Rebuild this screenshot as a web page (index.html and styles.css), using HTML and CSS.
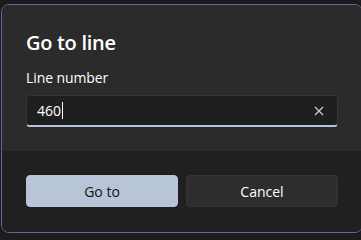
FILE: index.html
```html
<!DOCTYPE html>
<html>
<head>
<meta charset="utf-8">
<link rel="stylesheet" href="styles.css">
</head>
<body>
<div class="screen">
  <div class="dialog">
    <div class="content">
      <h1 class="title">Go to line</h1>
      <label class="label">Line number</label>
      <div class="input">
        <span class="value">460</span><span class="caret"></span>
        <span class="clear">
          <svg width="10" height="10" viewBox="0 0 10 10"><path d="M1 1 L9 9 M9 1 L1 9" stroke="#cfcfcf" stroke-width="1.2" fill="none"/></svg>
        </span>
      </div>
    </div>
    <div class="footer">
      <button class="btn primary">Go to</button>
      <button class="btn secondary">Cancel</button>
    </div>
  </div>
</div>
</body>
</html>
```

FILE: styles.css
```css
html, body {
  margin: 0;
  padding: 0;
  background: #1c1c1c;
  overflow: hidden;
  width: 361px;
  height: 235px;
}
.screen {
  padding: 4px 0 0 1px;
}
.dialog {
  width: 362px;
  height: 229px;
  box-sizing: border-box;
  border: 1px solid #5d6b9c;
  border-radius: 8px;
  overflow: hidden;
  display: flex;
  flex-direction: column;
  font-family: "Open Sans", "Noto Sans", sans-serif;
  color: #ffffff;
}
.content {
  background: #2b2b2b;
  padding: 24px 24px 24px 24px;
  height: 146px;
  box-sizing: border-box;
  display: flex;
  flex-direction: column;
}
.title {
  margin: 0 0 11px 0;
  font-size: 20px;
  line-height: 28px;
  font-weight: 600;
  letter-spacing: -0.3px;
}
.label {
  font-size: 14px;
  line-height: 20px;
  margin-bottom: 7px;
  letter-spacing: -0.1px;
}
.input {
  height: 32px;
  box-sizing: border-box;
  background: #1f1f1f;
  border: 1px solid #363636;
  border-bottom: 2px solid #b8c6dd;
  border-radius: 4px;
  display: flex;
  align-items: center;
  padding-left: 10px;
  font-size: 14px;
}
.value {
  line-height: 20px;
}
.caret {
  width: 1px;
  height: 17px;
  background: #ffffff;
  margin-left: 1px;
}
.clear {
  margin-left: auto;
  width: 36px;
  display: flex;
  justify-content: center;
  align-items: center;
}
.footer {
  flex: 1;
  background: #202020;
  padding: 24px 24px 0 24px;
  display: grid;
  grid-template-columns: 152px 152px;
  column-gap: 8px;
  align-content: start;
}
.btn {
  height: 32px;
  border-radius: 4px;
  font-family: "Open Sans", "Noto Sans", sans-serif;
  font-size: 14px;
  padding: 0;
  border: 1px solid transparent;
}
.primary {
  background: #b8c4d8;
  color: #111111;
  border-color: #b8c4d8;
}
.secondary {
  background: #2d2d2d;
  color: #ffffff;
  border-color: #353535;
}
```
